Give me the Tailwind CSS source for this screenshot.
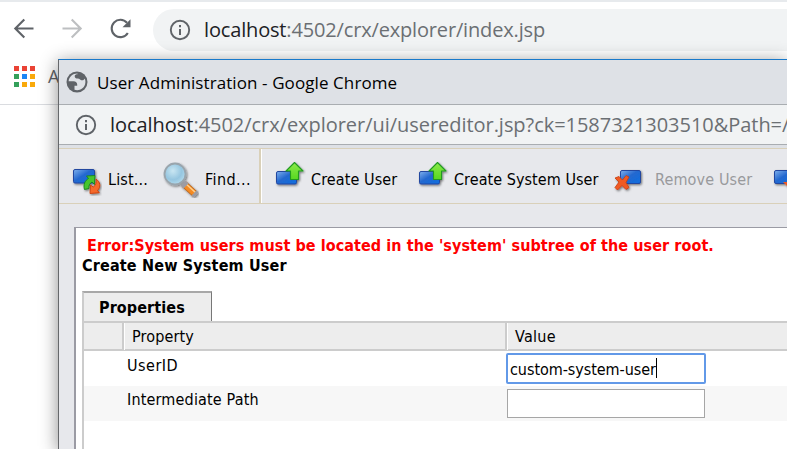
<!DOCTYPE html>
<html lang="en">
<head>
<meta charset="utf-8">
<title>User Administration</title>
<script src="https://cdn.jsdelivr.net/npm/@tailwindcss/browser@4"></script>
</head>
<body class="relative w-[787px] h-[449px] overflow-hidden bg-white whitespace-nowrap font-['Open_Sans','Noto_Sans',sans-serif]">
<svg width="0" height="0" class="absolute">
  <defs>
    <linearGradient id="blue" x1="0" y1="0" x2="1" y2="1"><stop offset="0" stop-color="#7fb0ec"/><stop offset=".45" stop-color="#2468cf"/><stop offset="1" stop-color="#0d6fe0"/></linearGradient>
    <linearGradient id="green" x1="0" y1="0" x2="0" y2="1"><stop offset="0" stop-color="#8bea4a"/><stop offset="1" stop-color="#58d820"/></linearGradient>
    <radialGradient id="lens" cx=".4" cy=".35" r=".7"><stop offset="0" stop-color="#c9e6f2"/><stop offset=".6" stop-color="#96c6e0"/><stop offset="1" stop-color="#b5dcee"/></radialGradient>
    <filter id="sh" x="-20%" y="-20%" width="150%" height="150%"><feDropShadow dx="1" dy="1.2" stdDeviation=".9" flood-color="#000" flood-opacity=".5"/></filter>
    <symbol id="info" viewBox="0 0 22 22"><circle cx="11" cy="11" r="9.2" fill="none" stroke="#5f6368" stroke-width="1.9"/><path d="M10 10h2v6h-2zM10 6h2v2.2h-2z" fill="#5f6368"/></symbol>
    <symbol id="create" viewBox="0 0 32 32"><g filter="url(#sh)"><rect x="2.500" y="12.500" width="20" height="12.500" rx="1.500" fill="url(#blue)" stroke="#2246a0"/><path d="M20.500 3.500l8.500 8.500h-4.500v8.500h-8v-8.500h-4.500z" fill="url(#green)" stroke="#239a22" stroke-width="1.100" stroke-linejoin="round"/></g></symbol>
  </defs>
</svg>

<!-- Main browser window -->
<header class="h-[105px] border-t-2 border-b border-t-[#e7eaed] border-b-[#dadce0]">
  <div class="flex h-[55px] items-center">
    <svg class="w-[153px] h-[55px] shrink-0" viewBox="0 2 153 55" fill="none" stroke="#5f6368" stroke-width="2.100">
      <path d="M33.500 28.500H15.500M24.300 19.500l-9 9 9 9"/>
      <path d="M62.500 28.500h18M71.700 19.500l9 9-9 9" stroke="#bdbfc1"/>
      <path d="M127.800 33a8.700 8.700 0 1 1-.8-10.200"/>
      <path d="M130.500 19.300v8h-8z" fill="#5f6368" stroke="none"/>
    </svg>
    <div class="flex grow h-[42px] items-center rounded-l-full bg-[#f1f3f4] pl-[16px]">
      <svg class="size-[22px] mr-[13px]"><use href="#info"/></svg>
      <span class="text-[20px] tracking-[-0.16px] text-[#6b6f73]"><span class="text-[#202124]">localhost</span>:4502/crx/explorer/index.jsp</span>
    </div>
  </div>
  <div class="flex items-center h-[38px] pl-[14px]">
    <div class="grid grid-cols-3 gap-x-[3px] gap-y-[3px] mr-[13px]">
      <i class="size-[5px] bg-[#ea4335]"></i><i class="size-[5px] bg-[#ea4335]"></i><i class="size-[5px] bg-[#ea4335]"></i>
      <i class="size-[5px] bg-[#34a05a]"></i><i class="size-[5px] bg-[#1a86f5]"></i><i class="size-[5px] bg-[#f9a90b]"></i>
      <i class="size-[5px] bg-[#34a05a]"></i><i class="size-[5px] bg-[#f9a90b]"></i><i class="size-[5px] bg-[#f9a90b]"></i>
    </div>
    <span class="text-[18px] text-[#5f6368]">A</span>
  </div>
</header>

<!-- Popup window -->
<section class="absolute left-[58px] top-[59px] w-[729px] h-[390px] border-t border-l border-t-[#1979ca] border-l-[#66686b] bg-[#e7e8ec] shadow-[0_3px_17px_rgba(0,0,0,0.45)] overflow-hidden">
  <div class="flex items-center h-[44px] bg-[#dee1e6] pl-[7px]">
    <svg class="size-[22px] mr-[9px]" viewBox="0 0 22 22"><circle cx="11" cy="11" r="10.500" fill="#5f6368"/><path d="M11.500 2.500C6.500 2.500 3 6 2.600 10.300l4.900 0c2.300 0 3.700 1.300 3.700 3.300v1.200l-2.700 0v3.900c4.500 1.500 9.300-1 10.600-5.500.6-2.200.3-4.200-.4-5.700-.5 1.500-1.800 2.200-3.500 1.700-1.200-.4-1.400-1.700-3.400-1.700-2 0-3.100-.8-3.100-2.300 0-1.600 1.300-2 2.800-2z" fill="#dee1e6"/></svg>
    <span class="text-[17px] tracking-[0.09px] text-black pt-px">User Administration - Google Chrome</span>
  </div>
  <div class="flex items-center h-[41px] border-y border-[#a9adb1] bg-[#f1f3f4] pl-[16px]">
    <svg class="size-[22px] mr-[13px] shrink-0"><use href="#info"/></svg>
    <span class="text-[20px] tracking-[-0.04px] text-[#6b6f73] pt-px"><span class="text-[#202124]">localhost</span>:4502/crx/explorer/ui/usereditor.jsp?ck=1587321303510&amp;Path=/</span>
  </div>
  <div class="h-[3px] bg-[#dee1e6]"></div>

  <nav class="flex h-[56px] border-y border-[#d9d0b9] font-['DejaVu_Sans_Condensed','DejaVu_Sans',sans-serif] text-[16px] text-black">
    <div class="flex shrink-0 items-center w-[202px] border-r-2 border-[#d9d0b9] pt-[7px]">
      <svg class="w-[30px] h-[32px] ml-[13px] mr-[6px]" viewBox="0 0 30 32"><g filter="url(#sh)"><rect x="1.500" y="5.500" width="21" height="13.500" rx="1.500" fill="url(#blue)" stroke="#2246a0"/><path d="M12.500 25.500c-1.500-5 .5-9 4-11l-2-2.500 8.500-.5-.5 9-2.500-2.500c-2.500 1.500-3.500 4-3 6.500z" fill="#45c62f" stroke="#16821c" stroke-width=".9"/><path d="M24 15c4.500 3 5 8 1.500 11.500l1.800 2.200-9.300.8.500-8.500 2.700 2c2.500-1.500 3.500-4.500 2.800-8z" fill="#f5692c" stroke="#c93e0c" stroke-width=".9"/></g></svg>
      <span class="w-[40px] tracking-[0.14px]">List...</span>
      <svg class="w-[36px] h-[36px] ml-[15px] mr-[6px]" viewBox="0 0 36 36"><g filter="url(#sh)"><path d="M17 19l5 5" stroke="#999" stroke-width="4"/><path d="M21 22l11 10" stroke="#b5651d" stroke-width="7"/><path d="M21 22l11 10" stroke="#f58a24" stroke-width="5.500"/><path d="M22 21l11 10" stroke="#ffd08a" stroke-width="1.500"/><path d="M20 21l3 3M31 31l2 2" stroke="#9c9ca4" stroke-width="7"/><circle cx="12" cy="12" r="10.500" fill="url(#lens)" stroke="#9aa5ad" stroke-width="1.800"/></g></svg>
      <span class="tracking-[0.4px]">Find...</span>
    </div>
    <div class="flex shrink-0 items-center border-l border-white pt-[7px]">
      <svg class="size-[32px] ml-[12px] mr-[5px] -mt-[9px]"><use href="#create"/></svg>
      <span class="w-[87px] tracking-[0.1px]">Create User</span>
      <svg class="size-[32px] ml-[19px] mr-[5px] -mt-[9px]"><use href="#create"/></svg>
      <span class="w-[145px] tracking-[0.06px]">Create System User</span>
      <svg class="w-[32px] h-[26px] ml-[13px] mr-[11px] mt-[3px]" viewBox="0 0 32 26"><g filter="url(#sh)"><rect x="8.500" y="2.500" width="20" height="13" rx="1.500" fill="url(#blue)" stroke="#2246a0"/><path d="M3 10l4-1.500 3.500 3.500 3.500-4.500 3 1.500-3 5.500 3 5-3 2-4-4-4.500 4.500-2.500-2.500 4-5.500z" fill="#f05a24" stroke="#c63c10" stroke-width=".8"/></g></svg>
      <span class="w-[98px] tracking-[0.14px] text-[#999a9d]">Remove User</span>
      <svg class="w-[30px] h-[26px] ml-[19px] mt-[3px]" viewBox="0 0 30 26"><g filter="url(#sh)"><rect x="2.500" y="2.500" width="20" height="13" rx="1.500" fill="url(#blue)" stroke="#2246a0"/><path d="M11 14l8 0 0 8z" fill="#f05a24"/></g></svg>
    </div>
  </nav>

  <main class="mt-[23px] ml-[15px] h-[223px] border-t border-l-2 border-[#9b9ba4] bg-white pl-[6px] pt-[8px] font-['DejaVu_Sans_Condensed','DejaVu_Sans',sans-serif] text-[16px] leading-[20px] text-black">
    <p class="pl-[5px] font-bold tracking-[0.07px] text-[#ff0000]">Error:System users must be located in the 'system' subtree of the user root.</p>
    <h1 class="font-bold tracking-[0.17px]">Create New System User</h1>
    <div class="mt-[15px] w-[130px] h-[30px] border-t-2 border-l-2 border-r border-t-[#a8a8a8] border-l-[#ccc] border-r-[#777] bg-[#ededed] pl-[15px] pt-[5px] font-bold tracking-[0.1px]">Properties</div>
    <div class="border-l-2 border-[#ccc] h-[129px]">
      <div class="grid grid-cols-[40px_383px_1fr] h-[30px] border-y-2 border-[#ccc] bg-[#ededed] leading-[27px] tracking-[0.15px]">
        <div class="border-r-2 border-[#ccc]"></div>
        <div class="border-r-2 border-r-[#ccc] border-l border-l-white pl-[7px]">Property</div>
        <div class="border-l border-white pl-[7px] tracking-[0.3px]">Value</div>
      </div>
      <div class="flex h-[35px] pl-[43px]">
        <div class="w-[379px] pt-[5px] tracking-[0.5px]">UserID</div>
        <div class="mt-[2px] flex w-[200px] h-[31px] items-center rounded-[2px] border-2 border-[#6299e8] bg-white pl-[2px] pt-[2px]"><span class="w-[146px] tracking-[-0.05px]">custom-system-user</span><i class="w-px h-[20px] bg-black -mt-[3px]"></i></div>
      </div>
      <div class="flex h-[35px] bg-[#f7f7f7] pl-[43px]">
        <div class="w-[380px] pt-[4px] tracking-[0.17px]">Intermediate Path</div>
        <div class="mt-[3px] w-[198px] h-[29px] border border-[#a6a6a6] bg-white"></div>
      </div>
    </div>
  </main>
</section>
</body>
</html>
